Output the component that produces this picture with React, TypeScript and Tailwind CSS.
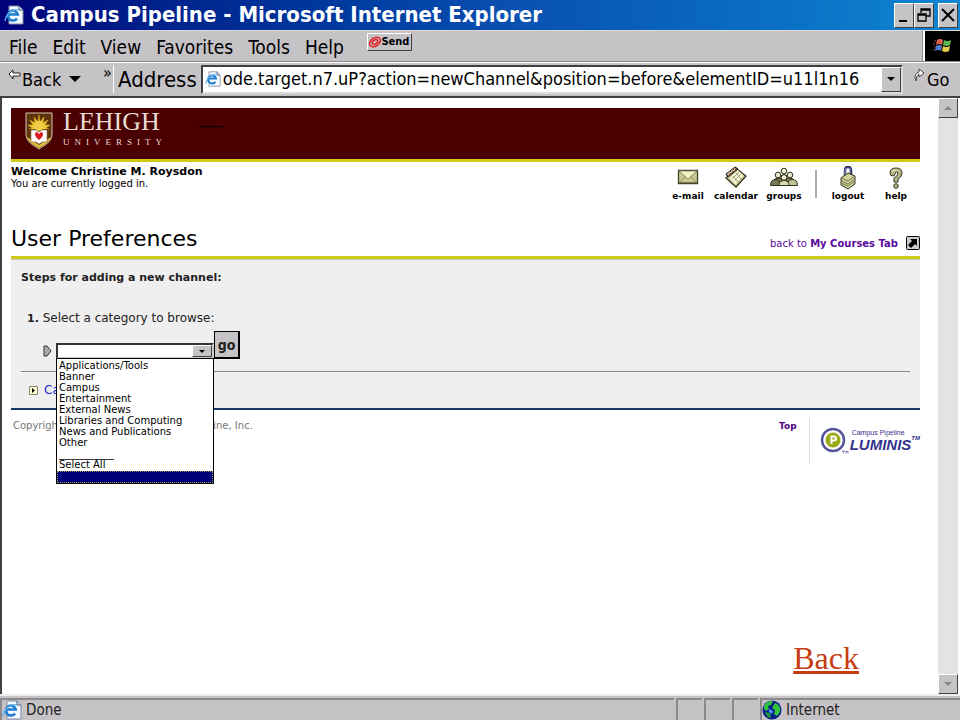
import type { ReactNode } from 'react'

const menus = ['File', 'Edit', 'View', 'Favorites', 'Tools', 'Help']

const categories = [
  'Applications/Tools',
  'Banner',
  'Campus',
  'Entertainment',
  'External News',
  'Libraries and Computing',
  'News and Publications',
  'Other',
  '___________',
  'Select All',
]

const raised = 'border border-t-white border-l-white border-r-[#404040] border-b-[#404040] bg-[#c6c3c6]'

function PageIcon({ className }: { className?: string }) {
  return (
    <svg viewBox="0 0 20 20" className={className} aria-hidden="true">
      <path d="M5 1h10l4 4v14H5z" fill="#f4f8ff" stroke="#7d8ba5" />
      <path d="M15 1v4h4" fill="#c9d6ec" stroke="#4b5c7d" />
      <path d="M13 13.500a5 5 0 1 1 .8-4H5" fill="none" stroke="#1c7cd0" strokeWidth="2.500" />
      <path d="M1 16C2 9 9 3 15 5" fill="none" stroke="#5fb2ee" strokeWidth="1.300" />
    </svg>
  )
}

function Globe() {
  return (
    <svg viewBox="0 0 20 20" className="size-5" aria-hidden="true">
      <circle cx="10" cy="10" r="9.500" fill="#0a1c8c" />
      <path d="M2 6c3-5 6-5 9-5l-2 4-3 1 1 3-3 2-2-2z" fill="#2fc43a" />
      <path d="M13 3c4 1 6 5 5 9l-3 4-3-2 1-4-3-2z" fill="#2fc43a" />
      <path d="M3 12l5 1 1 5c-3 0-5-3-6-6z" fill="#1f9c30" />
      <path d="M7 9l4 2-1 3-3-2z" fill="#4aa0ff" />
    </svg>
  )
}

function WindowsFlag() {
  return (
    <svg viewBox="0 0 20 18" className="h-[18px] w-5" aria-hidden="true">
      <path d="M1 4h2M0 7h2M1 10h2M0 13h2" stroke="#8a4a40" />
      <path d="M4 3q3-2 6 0l-1 5q-3-2-6 0z" fill="#e0604c" />
      <path d="M11 3q3 2 7 0l-1 5q-3 2-7 0z" fill="#59b84e" />
      <path d="M3 9q3-2 6 0l-1 5q-3-2-6 0z" fill="#4d7ed0" />
      <path d="M10 9q3 2 7 0l-1 5q-3 2-7 0z" fill="#e5cc45" />
    </svg>
  )
}

function Shield() {
  return (
    <svg viewBox="0 0 28 38" className="h-[38px] w-7" aria-hidden="true">
      <path d="M1 1h26v21c0 8-7 11-13 15C8 33 1 30 1 22z" fill="#5e350b" stroke="#d7c8b4" />
      <path d="M2 25l12 8 12-8c-2 6-7 8-12 11C9 33 4 31 2 25z" fill="#e1c23a" />
      <path
        d="M4 17l3-1-4-3 5 0-3-5 5 3-1-6 4 5 1-7 1 7 4-5-1 6 5-3-3 5 5 0-4 3 3 1"
        fill="#edc735"
        stroke="#d6a51d"
        strokeWidth=".6"
      />
      <circle cx="14" cy="14" r="5" fill="#f0cd46" />
      <path d="M6 18q5-1 8 2 3-3 8-2v12q-5-1-8 2-3-3-8-2z" fill="#fff" stroke="#99784f" strokeWidth=".7" />
      <path d="M14 28c-6-5-4-8-2-8l2 2 2-2c2 0 4 3-2 8z" fill="#db1820" />
    </svg>
  )
}

function MailIcon() {
  return (
    <svg viewBox="0 0 28 24" className="h-6 w-7" aria-hidden="true">
      <path d="M4.500 4.500h19v13h-19z" fill="#c8c890" stroke="#44442c" strokeWidth="1.300" />
      <path d="M5 17l6-6M23 17l-6-6" stroke="#8c8c60" />
      <path d="M5 16h18v1H5z" fill="#777750" />
      <path d="M5 5h18l-9 8z" fill="#f4f4cc" stroke="#77774e" strokeWidth=".8" />
    </svg>
  )
}

function CalendarIcon() {
  return (
    <svg viewBox="0 0 28 24" className="h-6 w-7" aria-hidden="true">
      <path d="M4 12L14 2l10 8-10 11z" fill="#d0d09a" stroke="#33331f" strokeWidth="1.300" />
      <path d="M8 12l8-8 5 6-8 8z" fill="#fafadc" />
      <path d="M4 8L13 1l3 2L6 11z" fill="#7a4426" stroke="#222" />
      <path d="M5 8l2 1 0-3 2 1 1-3 2 1 1-3" fill="none" stroke="#e4dcc8" />
      <path d="M10 13l7-7M12 15l7-7M11 10l5 6M14 7l5 6" stroke="#8e8e60" strokeWidth=".8" />
    </svg>
  )
}

function GroupsIcon() {
  return (
    <svg viewBox="0 0 28 24" className="h-6 w-7" aria-hidden="true">
      <g stroke="#33331f">
        <path d="M8 14q1-5 6-5t6 5z" fill="#a6a67c" />
        <circle cx="14" cy="5" r="2.800" fill="#eeeed0" />
        <path d="M4 16q0-4 4-4t4 4zM16 16q0-4 4-4t4 4z" fill="#8b8b65" />
        <circle cx="8" cy="9" r="2.800" fill="#eeeed0" />
        <circle cx="20" cy="9" r="2.800" fill="#eeeed0" />
        <path d="M.5 19.500q0-6 5-6t5 6z" fill="#77775a" />
        <path d="M17.500 19.500q0-6 5-6t5 6z" fill="#c4c498" />
        <path d="M9 19.500q0-5 5-5t5 5z" fill="#dcdcb0" />
        <circle cx="14" cy="11.500" r="2.800" fill="#eeeed0" />
      </g>
    </svg>
  )
}

function LockIcon() {
  return (
    <svg viewBox="0 0 28 24" className="h-6 w-7" aria-hidden="true">
      <path d="M11 11V5q0-4 3-4t3 4v5" fill="none" stroke="#222b55" strokeWidth="2.500" />
      <path d="M11 10V5q0-3 3-3t2 3v4" fill="none" stroke="#9ba6d0" />
      <path d="M7 12l7-5 7 3v8l-7 5-7-4z" fill="#d0d09a" stroke="#33331f" />
      <path d="M7 12l7 3 7-5M7 15l7 3 7-5M7 17l7 3 7-5" fill="none" stroke="#77774e" />
    </svg>
  )
}

function HelpIcon() {
  return (
    <svg viewBox="0 0 28 24" className="h-6 w-7" aria-hidden="true">
      <path
        d="M8 7Q8 2 14 2q6 0 6 5 0 4-4 6v3h-4v-4q4-2 4-5-1-2-3 0 0 3-2 3-3 0-3-3z"
        fill="#b8b888"
        stroke="#33331f"
      />
      <path d="M10 6q2-3 5-2" fill="none" stroke="#f4f4d4" />
      <circle cx="14" cy="20" r="2.300" fill="#b8b888" stroke="#33331f" />
    </svg>
  )
}

function Tool({ label, children }: { label: string; children: ReactNode }) {
  return (
    <a href="#" className="flex w-12 flex-col items-center text-[9px] leading-3 font-bold">
      {children}
      {label}
    </a>
  )
}

function LuminisLogo() {
  return (
    <div className="flex items-center text-[#33338c]">
      <svg viewBox="0 0 30 28" className="h-7 w-[30px]" aria-hidden="true">
        <circle cx="13" cy="13" r="11" fill="#fff" stroke="#57559c" strokeWidth="2.500" />
        <circle cx="13" cy="13" r="7.500" fill="#9aaa17" />
        <path d="M11.500 17V9.500H14a2 2 0 0 1 0 4h-2" fill="none" stroke="#fff" strokeWidth="2" />
        <path d="M22 24h3M23.500 24v2.500M26 26.500V24l1 1 1-1v2.500" fill="none" stroke="#57559c" strokeWidth=".7" />
      </svg>
      <div className="font-['Liberation_Sans',sans-serif]">
        <div className="pl-0.5 text-[7px] leading-2">Campus Pipeline</div>
        <div className="flex text-[15px] leading-4 font-bold italic">
          LUMINIS<sup className="text-[6px] leading-2">TM</sup>
        </div>
      </div>
    </div>
  )
}

function TitleBar() {
  const button = `${raised} flex h-[25px] w-5 items-center justify-center`
  return (
    <header className="flex h-[30px] items-center bg-linear-to-r from-[#00007b] via-[#0a4cae] to-[#1085d2] pr-0.5 pl-1 text-white">
      <PageIcon className="size-5" />
      <h1 className="ml-[7px] flex-1 text-[22px] leading-7 font-bold">Campus Pipeline - Microsoft Internet Explorer</h1>
      <button aria-label="Minimize" className={button}>
        <svg viewBox="0 0 16 18" className="h-[18px] w-4">
          <path d="M3 15h8" stroke="#000" strokeWidth="2" />
        </svg>
      </button>
      <button aria-label="Restore" className={button}>
        <svg viewBox="0 0 16 18" className="h-[18px] w-4" fill="none" stroke="#000">
          <path d="M5 7V3h9v7h-4M5 4h9M2 8h8v7H2zM2 9h8" strokeWidth="1.300" />
        </svg>
      </button>
      <button aria-label="Close" className={`${button} ml-1`}>
        <svg viewBox="0 0 16 18" className="h-[18px] w-4">
          <path d="M2 3l12 12M14 3L2 15" stroke="#000" strokeWidth="2" />
        </svg>
      </button>
    </header>
  )
}

function MenuBar() {
  return (
    <nav className="flex h-8 border-t border-b border-t-[#dedbde] border-b-[#8c898c] shadow-[0_1px_0_#fff]">
      <div className="flex flex-1 items-center gap-[15px] border-r border-[#8c898c] pt-0.5 pl-[9px] text-[19px]">
        {menus.map((menu) => (
          <button key={menu}>{menu}</button>
        ))}
        <button className={`${raised} mb-2.5 ml-2 flex h-[18px] w-[45px] items-center justify-center border-r-[#8c898c] border-b-[#8c898c] text-[11px] font-bold`}>
          <svg viewBox="0 0 12 12" className="size-3 shrink-0" fill="none" stroke="#df1d22" strokeWidth="1.500" aria-hidden="true">
            <ellipse cx="6" cy="6" rx="6" ry="4" transform="rotate(-35 6 6)" />
            <ellipse cx="6" cy="6" rx="3" ry="2" transform="rotate(-35 6 6)" />
          </svg>
          Send
        </button>
      </div>
      <div className="flex w-[37px] items-center justify-center border-l-2 border-white bg-black">
        <WindowsFlag />
      </div>
    </nav>
  )
}

function AddressBar() {
  return (
    <div className="flex h-8 items-center pt-0.5">
      <button className="flex w-[103px] items-center pl-2 text-[18px]">
        <svg viewBox="0 0 14 14" className="mb-2 h-[14px] w-3.5" aria-hidden="true">
          <path d="M1 6l4-4v3h7v3H5v3z" fill="#fff" stroke="#222" />
        </svg>
        Back
        <svg viewBox="0 0 12 6" className="ml-2 h-1.5 w-3" aria-hidden="true">
          <path d="M0 0h12L6 6z" />
        </svg>
      </button>
      <button className="mb-3 w-2 text-base leading-4">»</button>
      <label htmlFor="address" className="ml-0.5 flex h-7 items-center border-l border-white pl-1 text-[22px]">
        Address
      </label>
      <div className="ml-1 flex h-[29px] min-w-0 flex-1 items-center border-2 border-t-[#404040] border-r-[#dedbde] border-b-[#dedbde] border-l-[#404040] bg-white pl-0.5">
        <PageIcon className="size-4 shrink-0" />
        <input
          id="address"
          className="ml-0.5 min-w-0 flex-1 text-[18px] leading-6 outline-none"
          defaultValue="ode.target.n7.uP?action=newChannel&position=before&elementID=u11l1n16"
        />
        <button aria-label="Show history" className={`${raised} flex h-[25px] w-5 items-center justify-center`}>
          <svg viewBox="0 0 8 4" className="h-1 w-2">
            <path d="M0 0h8L4 4z" />
          </svg>
        </button>
      </div>
      <button className="flex w-[57px] items-center pl-2.5 text-[18px]">
        <svg viewBox="0 0 14 16" className="mb-2 h-4 w-3.5" fill="none" aria-hidden="true">
          <path d="M3 14Q0 7 6 5V2l5 4-5 4V7Q3 9 3 14z" fill="#fff" stroke="#444" />
        </svg>
        Go
      </button>
    </div>
  )
}

function CategoryPicker() {
  return (
    <div className="mt-1 flex items-end pl-[22px]">
      <svg viewBox="0 0 9 12" className="mb-0.5 h-3 w-[9px]" aria-hidden="true">
        <path d="M1 1h3l4 5-4 5H1z" fill="#aaa" stroke="#333" />
      </svg>
      <div className="relative ml-1 w-[158px]">
        <div className="flex h-4 border-2 border-t-[#333] border-r-[#ccc] border-b-[#ccc] border-l-[#333] bg-white">
          <select id="category" className="min-w-0 flex-1 appearance-none outline-none" defaultValue="">
            <option value="" />
          </select>
          <span className={`${raised} flex w-5 items-center justify-center`}>
            <svg viewBox="0 0 6 3" className="h-[3px] w-1.5" aria-hidden="true">
              <path d="M0 0h6L3 3z" />
            </svg>
          </span>
        </div>
        <ul className="absolute top-[15px] left-0 z-10 w-full border border-black bg-white pt-px text-[10px] leading-[11px] text-black">
          {categories.map((category) => (
            <li key={category} className="h-[11px] pl-0.5">
              {category}
            </li>
          ))}
          <li className="mt-px h-3 border border-dotted border-[#9c9c50] bg-[#00007b]" />
        </ul>
      </div>
      <button className="h-7 w-[26px] border border-r-2 border-b-2 border-black bg-[#c6c3c6] font-['DejaVu_Sans_Condensed','DejaVu_Sans',sans-serif] text-sm font-bold">
        go
      </button>
    </div>
  )
}

function Portal() {
  return (
    <main className="min-w-0 flex-1 pt-2.5 pr-[18px] pl-[9px] font-['DejaVu_Sans',sans-serif]">
      <div className="flex h-[54px] items-start border-b-3 border-[#cfca16] bg-[#4a0000] pt-1 pl-3.5">
        <Shield />
        <div className="ml-2.5 font-['Liberation_Serif',serif] text-[#e8dcd4]">
          <div className="text-[26px] leading-5">LEHIGH</div>
          <div className="mt-1 text-[9px] leading-3 tracking-[5px]">UNIVERSITY</div>
        </div>
        <div className="mt-3.5 ml-8 w-6 border-b border-black" />
      </div>
      <div className="flex h-16 items-start justify-between pt-1">
        <div className="text-[10px] leading-3">
          <p className="text-[11px] font-bold">Welcome Christine M. Roysdon</p>
          <p>You are currently logged in.</p>
        </div>
        <nav className="flex">
          <Tool label="e-mail">
            <MailIcon />
          </Tool>
          <Tool label="calendar">
            <CalendarIcon />
          </Tool>
          <Tool label="groups">
            <GroupsIcon />
          </Tool>
          <div className="mx-[7px] mt-1 h-7 border-l-2 border-[#aaa]" />
          <Tool label="logout">
            <LockIcon />
          </Tool>
          <Tool label="help">
            <HelpIcon />
          </Tool>
        </nav>
      </div>
      <div className="flex h-[30px] items-start justify-between">
        <h2 className="text-[22px] leading-[26px]">User Preferences</h2>
        <a href="#" className="flex h-[26px] items-center gap-2 self-end text-[10px] text-[#5a0a9c]">
          <span>
            back to <b>My Courses Tab</b>
          </span>
          <svg viewBox="0 0 14 14" className="size-3.5" aria-hidden="true">
            <rect x=".5" y=".5" width="13" height="13" rx="1" fill="#ccc" stroke="#000" />
            <path d="M4 3h7v7L9 8l-4 4-3-3 4-4z" />
          </svg>
        </a>
      </div>
      <section className="border-t-3 border-b-2 border-t-[#cfca16] border-b-[#16396b] bg-[#efefef]">
        <div className="border-t border-[#c9c9c9] px-2.5 pt-2.5 pb-2.5 text-[12px] leading-4 text-[#222]">
          <h3 className="text-[11px] leading-4 font-bold">Steps for adding a new channel:</h3>
          <label htmlFor="category" className="mt-6 block pl-1.5 text-[12px]">
            <b className="text-[11px]">1.</b> Select a category to browse:
          </label>
          <CategoryPicker />
          <hr className="mt-3 border-[#888]" />
          <a href="#" className="mt-2.5 flex items-center gap-1.5 pl-2 text-[#2222cc]">
            <svg viewBox="0 0 9 9" className="size-[9px]" aria-hidden="true">
              <path d="M.5.5h8v8h-8z" fill="#ffffdd" stroke="#888866" />
              <path d="M3 2l3 2.500L3 7z" />
            </svg>
            Cancel
          </a>
        </div>
      </section>
      <footer className="flex items-start text-[10px] leading-3 text-[#777]">
        <p className="flex-1 pt-2.5 pl-0.5">Copyright © 1999 - 2002, Campus Pipeline, Inc.</p>
        <a href="#" className="pt-2.5 pr-3 text-[9px] font-bold text-[#4b0082]">
          Top
        </a>
        <div className="mt-2 flex h-[46px] items-center border-l border-[#ddd] pl-2.5">
          <LuminisLogo />
        </div>
      </footer>
    </main>
  )
}

function ScrollBar() {
  const arrow = `${raised} flex h-5 items-center justify-center`
  return (
    <div className="flex w-5 flex-col justify-between bg-[#e3e3e3]">
      <button aria-label="Scroll up" className={arrow}>
        <svg viewBox="0 0 8 4" className="h-1 w-2">
          <path d="M0 4h8L4 0z" fill="#888" />
        </svg>
      </button>
      <button aria-label="Scroll down" className={arrow}>
        <svg viewBox="0 0 8 4" className="h-1 w-2">
          <path d="M0 0h8L4 4z" fill="#888" />
        </svg>
      </button>
    </div>
  )
}

function StatusBar() {
  const pane = 'border-t-2 border-l-2 border-[#8c898c] h-[22px]'
  return (
    <footer className="flex h-[26px] gap-0.5 border-t-2 border-[#efefef] pt-0.5 text-[15px] text-[#222]">
      <div className={`${pane} flex flex-1 items-center gap-1`}>
        <PageIcon className="size-5" />
        Done
      </div>
      <div className={`${pane} w-[26px]`} />
      <div className={`${pane} w-[26px]`} />
      <div className={`${pane} w-[26px]`} />
      <div className={`${pane} flex w-[200px] items-center gap-1`}>
        <Globe />
        Internet
      </div>
    </footer>
  )
}

export default function App() {
  return (
    <div className="flex min-h-screen flex-col bg-[#c6c3c6] font-['DejaVu_Sans_Condensed','DejaVu_Sans',sans-serif] text-black">
      <TitleBar />
      <MenuBar />
      <AddressBar />
      <div className="mt-0.5 flex flex-1 border-t-2 border-l-2 border-[#404040] bg-white pr-0.5">
        <div className="flex min-w-0 flex-1 flex-col">
          <Portal />
          <div className="flex justify-end pr-[79px] pb-4 font-['Liberation_Serif',serif] text-[32px] leading-10 text-[#c63d14]">
            <a href="#" className="underline">
              Back
            </a>
          </div>
        </div>
        <ScrollBar />
      </div>
      <StatusBar />
    </div>
  )
}
